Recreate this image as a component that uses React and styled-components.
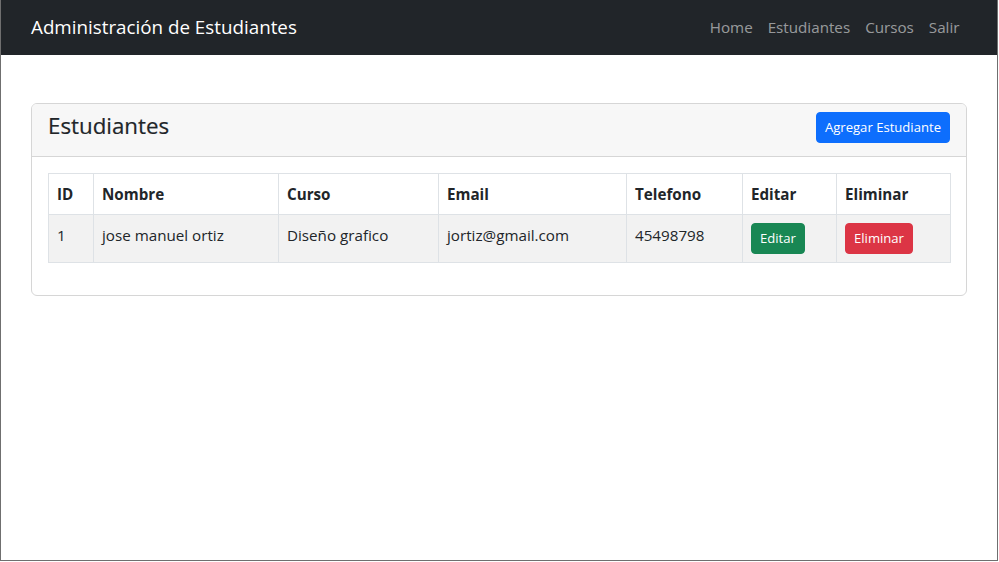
import React from "react";
import styled, { createGlobalStyle } from "styled-components";

const students = [
  {
    id: 1,
    nombre: "jose manuel ortiz",
    curso: "Diseño grafico",
    email: "jortiz@gmail.com",
    telefono: "45498798",
  },
];

const columns = [
  { label: "ID", width: 45 },
  { label: "Nombre", width: 185 },
  { label: "Curso", width: 160 },
  { label: "Email", width: 188 },
  { label: "Telefono", width: 116 },
  { label: "Editar", width: 94 },
  { label: "Eliminar", width: 114 },
];

const GlobalStyle = createGlobalStyle`
  * {
    box-sizing: border-box;
  }

  body {
    margin: 0;
    background: #ffffff;
    font-family: "Open Sans", "Noto Sans", sans-serif;
    color: #212529;
  }
`;

const App = () => (
  <>
    <GlobalStyle />
    <Window>
      <Navbar>
        <NavContainer>
          <Brand>Administración de Estudiantes</Brand>
          <NavLinks>
            <NavLink>Home</NavLink>
            <NavLink>Estudiantes</NavLink>
            <NavLink>Cursos</NavLink>
            <NavLink>Salir</NavLink>
          </NavLinks>
        </NavContainer>
      </Navbar>

      <Container>
        <Card>
          <CardHeader>
            <CardTitle>Estudiantes</CardTitle>
            <Button $variant="primary">Agregar Estudiante</Button>
          </CardHeader>
          <CardBody>
            <Table>
              <colgroup>
                {columns.map((c) => (
                  <col key={c.label} style={{ width: c.width }} />
                ))}
              </colgroup>
              <thead>
                <tr>
                  {columns.map((c) => (
                    <Th key={c.label}>{c.label}</Th>
                  ))}
                </tr>
              </thead>
              <tbody>
                {students.map((s) => (
                  <StripedRow key={s.id}>
                    <Td>{s.id}</Td>
                    <Td>{s.nombre}</Td>
                    <Td>{s.curso}</Td>
                    <Td>{s.email}</Td>
                    <Td>{s.telefono}</Td>
                    <Td>
                      <Button $variant="success">Editar</Button>
                    </Td>
                    <Td>
                      <Button $variant="danger">Eliminar</Button>
                    </Td>
                  </StripedRow>
                ))}
              </tbody>
            </Table>
          </CardBody>
        </Card>
      </Container>
    </Window>
  </>
);

const Window = styled.div`
  width: 998px;
  height: 561px;
  border: 1px solid #6f6f6f;
  border-top: none;
  background: #ffffff;
  overflow: hidden;
`;

const Navbar = styled.nav`
  height: 55px;
  background: #212529;
  display: flex;
  align-items: center;
`;

const NavContainer = styled.div`
  width: 960px;
  margin: 0 auto;
  padding: 0 12px;
  display: flex;
  align-items: center;
  justify-content: space-between;
`;

const Brand = styled.a`
  font-size: 18.8px;
  line-height: 30px;
  color: #ffffff;
  padding: 0 0 1px;
  white-space: nowrap;
`;

const NavLinks = styled.div`
  display: flex;
  align-items: center;
`;

const NavLink = styled.a`
  font-size: 15.2px;
  line-height: 24px;
  padding: 0 7.5px 2px;
  color: rgba(255, 255, 255, 0.55);
  white-space: nowrap;
`;

const Container = styled.main`
  width: 960px;
  margin: 48px auto 0;
  padding: 0 12px;
`;

const Card = styled.section`
  border: 1px solid #d6d6d6;
  border-radius: 6px;
  overflow: hidden;
`;

const CardHeader = styled.header`
  display: flex;
  align-items: flex-start;
  justify-content: space-between;
  padding: 8px 16px;
  background: #f7f7f7;
  border-bottom: 1px solid #d6d6d6;
`;

const CardTitle = styled.h4`
  margin: 0 0 7px;
  font-size: 22.3px;
  line-height: 28.8px;
  font-weight: 500;
  color: #212529;
  -webkit-text-stroke: 0.2px #212529;
`;

const variants = {
  primary: "#0d6efd",
  success: "#198754",
  danger: "#dc3545",
};

const Button = styled.button`
  font-family: inherit;
  font-size: 13.1px;
  line-height: 21px;
  padding: 4px 8px;
  border: 1px solid ${({ $variant }) => variants[$variant]};
  border-radius: 4px;
  background: ${({ $variant }) => variants[$variant]};
  color: #ffffff;
  white-space: nowrap;
  cursor: pointer;
`;

const CardBody = styled.div`
  padding: 16px;
`;

const Table = styled.table`
  width: 902px;
  table-layout: fixed;
  border-collapse: collapse;
  margin-bottom: 16px;
  font-size: 15.2px;
`;

const Th = styled.th`
  text-align: left;
  font-weight: 700;
  line-height: 24px;
  padding: 8px;
  border: 1px solid #dee2e6;
  vertical-align: top;
`;

const StripedRow = styled.tr`
  background: #f2f2f2;
`;

const Td = styled.td`
  line-height: 24px;
  padding: 8px;
  border: 1px solid #dee2e6;
  vertical-align: top;
  white-space: nowrap;
`;

export default App;
